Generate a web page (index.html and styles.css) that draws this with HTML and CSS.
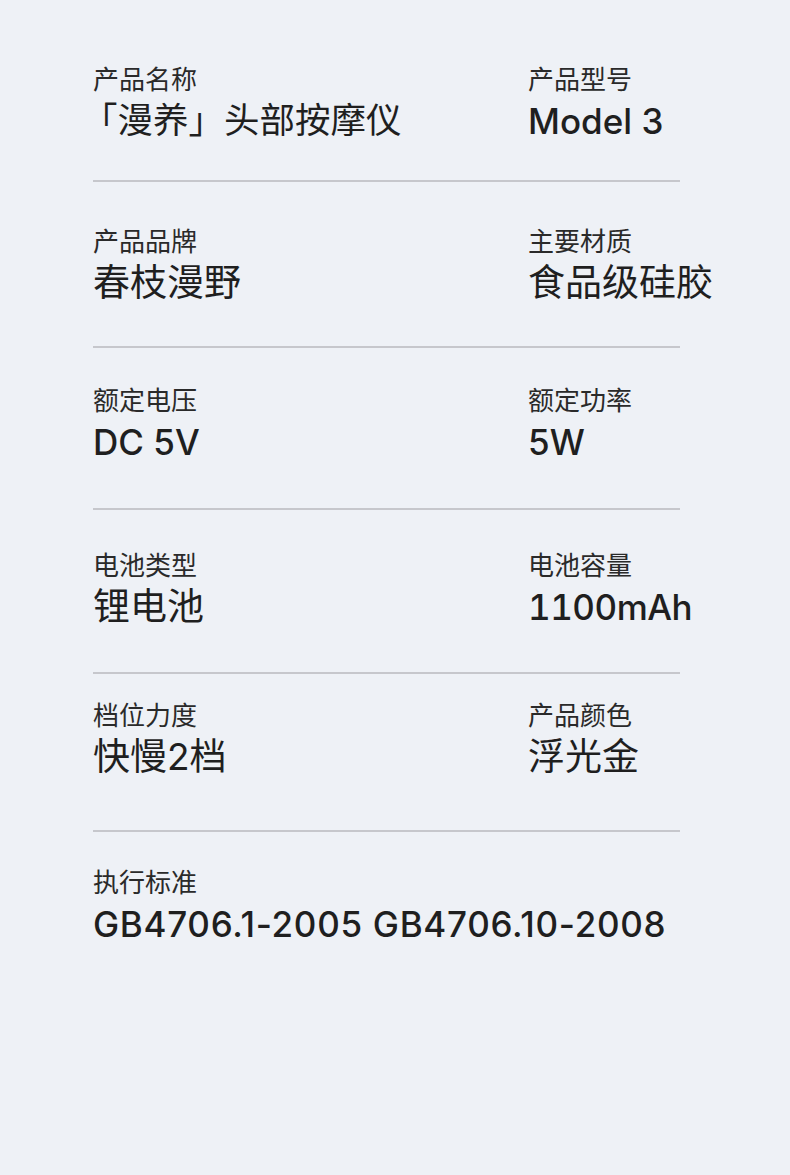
FILE: index.html
```html
<!DOCTYPE html>
<html lang="zh-CN">
<head>
<meta charset="utf-8">
<title>产品参数</title>
<link rel="stylesheet" href="styles.css">
</head>
<body>
<main class="specs">
  <section class="row row-1">
    <div class="cell"><div class="label">产品名称</div><div class="value value-bracket">「漫养」头部按摩仪</div></div>
    <div class="cell"><div class="label">产品型号</div><div class="value value-latin">Model 3</div></div>
  </section>
  <section class="row row-2">
    <div class="cell"><div class="label">产品品牌</div><div class="value">春枝漫野</div></div>
    <div class="cell"><div class="label">主要材质</div><div class="value">食品级硅胶</div></div>
  </section>
  <section class="row row-3">
    <div class="cell"><div class="label">额定电压</div><div class="value value-latin">DC 5V</div></div>
    <div class="cell"><div class="label">额定功率</div><div class="value value-latin">5W</div></div>
  </section>
  <section class="row row-4">
    <div class="cell"><div class="label">电池类型</div><div class="value">锂电池</div></div>
    <div class="cell"><div class="label">电池容量</div><div class="value value-latin value-tnum">1100mAh</div></div>
  </section>
  <section class="row row-5">
    <div class="cell"><div class="label">档位力度</div><div class="value">快慢2档</div></div>
    <div class="cell"><div class="label">产品颜色</div><div class="value">浮光金</div></div>
  </section>
  <section class="row row-6 row-last">
    <div class="cell"><div class="label">执行标准</div><div class="value value-latin value-std">GB4706.1-2005 GB4706.10-2008</div></div>
  </section>
</main>
</body>
</html>
```

FILE: styles.css
```css
html, body {
  margin: 0;
  padding: 0;
  background: #eef1f6;
}
body {
  width: 790px;
  min-height: 1175px;
  font-family: Inter, "Noto Sans CJK SC", sans-serif;
  color: #222222;
}
.specs {
  margin-left: 93px;
  width: 587px;
}
.row {
  display: grid;
  grid-template-columns: 435px 1fr;
  border-bottom: 2px solid #c6c7cc;
}
.row-last {
  border-bottom: none;
  grid-template-columns: 1fr;
}
.row-1 { padding-top: 64px; padding-bottom: 39px; }
.row-2 { padding-top: 44px; padding-bottom: 43px; }
.row-3 { padding-top: 37px; padding-bottom: 46px; }
.row-4 { padding-top: 40px; padding-bottom: 45px; }
.row-5 { padding-top: 26px; padding-bottom: 53px; }
.row-6 { padding-top: 35px; }
.cell {
  display: flex;
  flex-direction: column;
  gap: 9px;
  white-space: nowrap;
}
.label {
  font-family: "Noto Sans CJK SC", sans-serif;
  font-size: 26px;
  line-height: 28px;
  color: #2a2a2a;
}
.value {
  font-size: 37px;
  line-height: 40px;
  font-weight: 400;
  color: #1f1f1f;
}
.value-latin {
  font-weight: 500;
  font-size: 35px;
}
.value-tnum {
  font-variant-numeric: tabular-nums;
  letter-spacing: -0.5px;
}
.value-std {
  letter-spacing: 0.7px;
}
.value-bracket {
  font-size: 35.5px;
  margin-left: -11px;
}
```
